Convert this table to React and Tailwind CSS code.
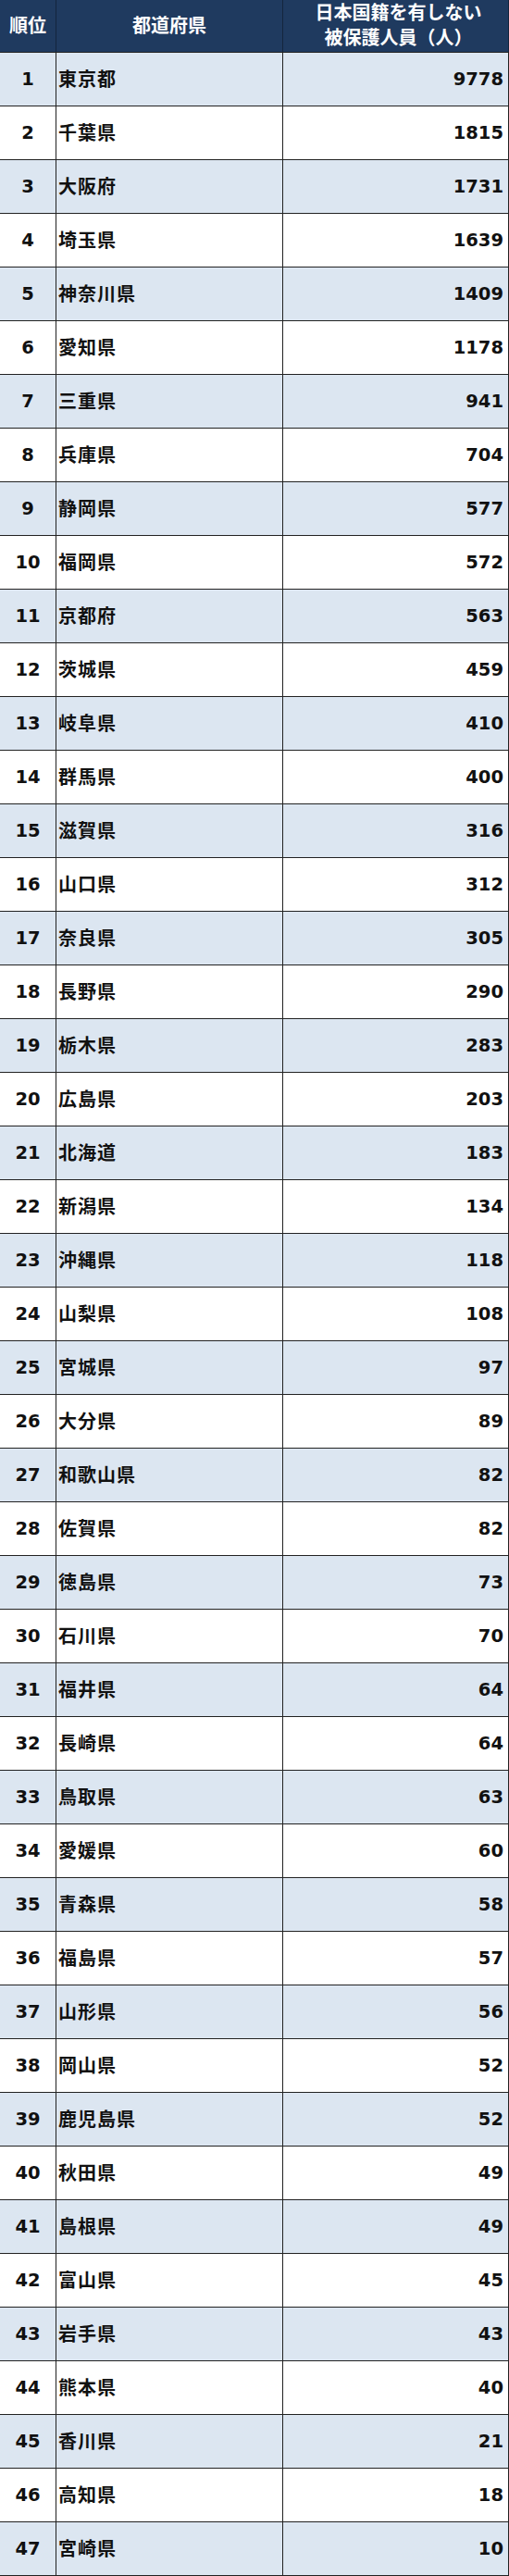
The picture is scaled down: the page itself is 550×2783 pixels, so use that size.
const data = [
["東京都",9778],["千葉県",1815],["大阪府",1731],["埼玉県",1639],["神奈川県",1409],["愛知県",1178],["三重県",941],["兵庫県",704],["静岡県",577],["福岡県",572],["京都府",563],["茨城県",459],["岐阜県",410],["群馬県",400],["滋賀県",316],["山口県",312],["奈良県",305],["長野県",290],["栃木県",283],["広島県",203],["北海道",183],["新潟県",134],["沖縄県",118],["山梨県",108],["宮城県",97],["大分県",89],["和歌山県",82],["佐賀県",82],["徳島県",73],["石川県",70],["福井県",64],["長崎県",64],["鳥取県",63],["愛媛県",60],["青森県",58],["福島県",57],["山形県",56],["岡山県",52],["鹿児島県",52],["秋田県",49],["島根県",49],["富山県",45],["岩手県",43],["熊本県",40],["香川県",21],["高知県",18],["宮崎県",10]
];

const jp = { fontFamily: '"DejaVu Sans", "Noto Sans CJK JP", sans-serif' };

export default function App() {
  return (
    <div className="w-[550px] bg-white" style={jp}>
      <div className="grid grid-cols-[61px_245px_1fr] h-[57px] bg-[#1f3a5f] text-white font-bold text-[20px] border-b border-[#222]">
        <div className="flex items-center justify-center border-r border-[#14253d]">順位</div>
        <div className="flex items-center justify-center border-r border-[#14253d]">都道府県</div>
        <div className="flex flex-col items-center justify-center leading-[27px] border-r border-[#14253d] pl-[6px]">
          <span>日本国籍を有しない</span>
          <span>被保護人員（人）</span>
        </div>
      </div>
      {data.map(([name, n], i) => (
        <div
          key={i}
          className={`grid grid-cols-[61px_245px_1fr] h-[58px] border-b border-[#222] font-bold text-[#111] ${i % 2 === 0 ? "bg-[#dce6f1]" : "bg-white"}`}
        >
          <div className="flex items-center justify-center border-r border-[#222] text-[19.5px]">{i + 1}</div>
          <div className="flex items-center pl-[2px] border-r border-[#222] text-[20px] tracking-[1px]">{name}</div>
          <div className="flex items-center justify-end pr-[5px] border-r border-[#222] text-[19.5px]">{n}</div>
        </div>
      ))}
    </div>
  );
}
